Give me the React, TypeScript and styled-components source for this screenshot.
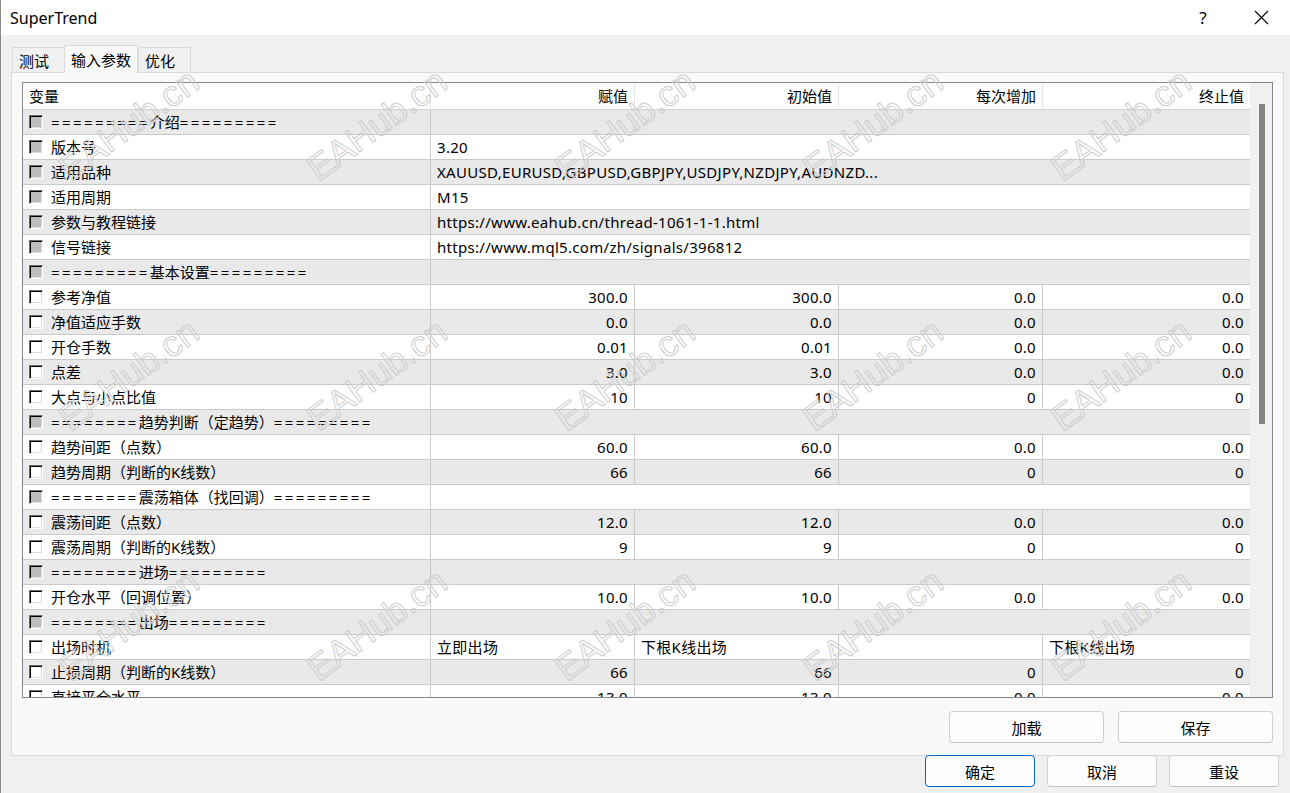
import styled, { createGlobalStyle } from "styled-components";

const GlobalStyle = createGlobalStyle`
  html, body {
    margin: 0;
    padding: 0;
    background: #f0f0f0;
  }
  * {
    box-sizing: border-box;
  }
`;

const COLS = "408px 204px 204px 204px 207px";
const FONT = `"Noto Sans", "Noto Sans CJK SC", sans-serif`;

type Row =
  | { kind: "section"; title: string; pre: number; post: number }
  | { kind: "info"; name: string; value: string }
  | { kind: "num"; name: string; values: string[] }
  | { kind: "text"; name: string; values: string[] };

const ROWS: Row[] = [
  { kind: "section", title: "介绍", pre: 9, post: 9 },
  { kind: "info", name: "版本号", value: "3.20" },
  { kind: "info", name: "适用品种", value: "XAUUSD,EURUSD,GBPUSD,GBPJPY,USDJPY,NZDJPY,AUDNZD..." },
  { kind: "info", name: "适用周期", value: "M15" },
  { kind: "info", name: "参数与教程链接", value: "https://www.eahub.cn/thread-1061-1-1.html" },
  { kind: "info", name: "信号链接", value: "https://www.mql5.com/zh/signals/396812" },
  { kind: "section", title: "基本设置", pre: 9, post: 9 },
  { kind: "num", name: "参考净值", values: ["300.0", "300.0", "0.0", "0.0"] },
  { kind: "num", name: "净值适应手数", values: ["0.0", "0.0", "0.0", "0.0"] },
  { kind: "num", name: "开仓手数", values: ["0.01", "0.01", "0.0", "0.0"] },
  { kind: "num", name: "点差", values: ["3.0", "3.0", "0.0", "0.0"] },
  { kind: "num", name: "大点与小点比值", values: ["10", "10", "0", "0"] },
  { kind: "section", title: "趋势判断（定趋势）", pre: 8, post: 9 },
  { kind: "num", name: "趋势间距（点数）", values: ["60.0", "60.0", "0.0", "0.0"] },
  { kind: "num", name: "趋势周期（判断的K线数）", values: ["66", "66", "0", "0"] },
  { kind: "section", title: "震荡箱体（找回调）", pre: 8, post: 9 },
  { kind: "num", name: "震荡间距（点数）", values: ["12.0", "12.0", "0.0", "0.0"] },
  { kind: "num", name: "震荡周期（判断的K线数）", values: ["9", "9", "0", "0"] },
  { kind: "section", title: "进场", pre: 8, post: 9 },
  { kind: "num", name: "开仓水平（回调位置）", values: ["10.0", "10.0", "0.0", "0.0"] },
  { kind: "section", title: "出场", pre: 8, post: 9 },
  { kind: "text", name: "出场时机", values: ["立即出场", "下根K线出场", "", "下根K线出场"] },
  { kind: "num", name: "止损周期（判断的K线数）", values: ["66", "66", "0", "0"] },
  { kind: "num", name: "直接平仓水平", values: ["13.0", "13.0", "0.0", "0.0"] },
];

const Window = styled.div`
  position: relative;
  width: 1290px;
  height: 793px;
  overflow: hidden;
  background: #f0f0f0;
  border-left: 1px solid #8a8a8a;
  font-family: ${FONT};
  color: #000;
  display: flex;
  flex-direction: column;
`;

const TitleBar = styled.div`
  height: 35px;
  flex: none;
  background: #fff;
  display: flex;
  align-items: center;
  padding-left: 9px;
  font-size: 16px;
`;

const Title = styled.div`
  flex: 1;
`;

const TitleButton = styled.div`
  width: 58px;
  height: 35px;
  display: flex;
  align-items: center;
  justify-content: center;
  font-size: 17px;
`;

const Body = styled.div`
  flex: 1;
  display: flex;
  flex-direction: column;
  padding: 10px 6px 0 10px;
`;

const Tabs = styled.div`
  display: flex;
  align-items: flex-end;
  height: 27px;
  padding-left: 1px;
`;

const Tab = styled.div<{ $active?: boolean }>`
  height: ${(p) => (p.$active ? "28px" : "25px")};
  padding: ${(p) => (p.$active ? "0 6px" : "0 15px 0 6px")};
  display: flex;
  align-items: center;
  font-size: 15px;
  background: ${(p) => (p.$active ? "#f9f9f9" : "#f0f0f0")};
  border: 1px solid #d9d9d9;
  border-bottom: none;
  margin-bottom: ${(p) => (p.$active ? "-1px" : "0")};
  margin-left: ${(p) => (p.$active ? "-1px" : "0")};
  position: relative;
  z-index: ${(p) => (p.$active ? 1 : 0)};
`;

const Panel = styled.div`
  height: 684px;
  background: #f9f9f9;
  border: 1px solid #d9d9d9;
  padding: 9px 10px 10px 10px;
  display: flex;
  flex-direction: column;
`;

const ListBox = styled.div`
  height: 616px;
  width: 1251px;
  border: 1px solid #828790;
  background: #fff;
  display: flex;
`;

const ListContent = styled.div`
  width: 1227px;
  display: flex;
  flex-direction: column;
`;

const HeaderRow = styled.div`
  display: grid;
  grid-template-columns: ${COLS};
  height: 27px;
  flex: none;
  border-bottom: 1px solid #d2d2d2;
`;

const HeaderCell = styled.div<{ $left?: boolean }>`
  font-size: 15px;
  line-height: 26px;
  padding: 0 6px;
  text-align: ${(p) => (p.$left ? "left" : "right")};
  border-right: 1px solid #e5e5e5;
  &:last-child {
    border-right: none;
  }
`;

const Rows = styled.div`
  flex: 1;
  overflow: hidden;
`;

const RowLine = styled.div<{ $alt: boolean }>`
  display: grid;
  grid-template-columns: ${COLS};
  height: 25px;
  background: ${(p) => (p.$alt ? "#e9e9e9" : "#fff")};
  border-bottom: 1px solid #cacaca;
`;

const Cell = styled.div<{ $align?: "left" | "right"; $span?: boolean }>`
  font-size: 15px;
  line-height: 24px;
  letter-spacing: 0.3px;
  padding: 0 6px;
  white-space: nowrap;
  overflow: visible;
  text-align: ${(p) => (p.$align === "right" ? "right" : "left")};
  grid-column: ${(p) => (p.$span ? "2 / -1" : "auto")};
  border-right: 1px solid #cacaca;
  &:last-child {
    border-right: none;
  }
`;

const NameCell = styled(Cell)`
  display: flex;
  align-items: center;
  gap: 8px;
  letter-spacing: 0;
`;

const Equals = styled.span`
  letter-spacing: 2.4px;
`;

const Check = styled.span<{ $disabled?: boolean }>`
  width: 14px;
  height: 14px;
  flex: none;
  background: ${(p) => (p.$disabled ? "#bdbdbd" : "#fff")};
  border-top: 1px solid #6d6d6d;
  border-left: 1px solid #6d6d6d;
  border-right: 1px solid #fff;
  border-bottom: 1px solid #fff;
  box-shadow: inset 1px 1px 0 #000, inset -1px -1px 0 #dedede;
`;

const ScrollTrack = styled.div`
  width: 22px;
  flex: none;
  background: #f0f0f0;
  padding-top: 21px;
  display: flex;
  justify-content: center;
`;

const ScrollThumb = styled.div`
  width: 6px;
  height: 320px;
  margin-left: 1px;
  background: #858585;
`;

const PanelButtons = styled.div`
  display: flex;
  justify-content: flex-end;
  gap: 14px;
  margin-top: 13px;
`;

const Button = styled.button<{ $w: number; $primary?: boolean }>`
  width: ${(p) => p.$w}px;
  height: 32px;
  font-family: ${FONT};
  font-size: 15px;
  color: #000;
  background: #fdfdfd;
  border: 1px solid ${(p) => (p.$primary ? "#0067c0" : "#d0d0d0")};
  border-bottom-color: ${(p) => (p.$primary ? "#0067c0" : "#bfbfbf")};
  border-radius: 4px;
  padding: 0;
`;

const Footer = styled.div`
  display: flex;
  justify-content: flex-end;
  gap: 12px;
  padding-right: 5px;
  margin-top: -1px;
`;

const Watermark = styled.div`
  position: absolute;
  width: 220px;
  margin-left: -110px;
  margin-top: -21px;
  text-align: center;
  font-family: "Liberation Sans", Arial, sans-serif;
  font-size: 36px;
  line-height: 42px;
  color: transparent;
  -webkit-text-stroke: 1px #cdcdcd;
  transform: rotate(-36deg);
  pointer-events: none;
  white-space: nowrap;
`;

function CloseIcon() {
  return (
    <svg width="15" height="15" viewBox="0 0 15 15">
      <path d="M1 1 L14 14 M14 1 L1 14" stroke="#000" strokeWidth="1.1" fill="none" />
    </svg>
  );
}

function renderRow(row: Row, i: number) {
  const alt = i % 2 === 0;
  const disabled = row.kind === "section" || row.kind === "info";
  return (
    <RowLine key={i} $alt={alt}>
      <NameCell>
        <Check $disabled={disabled} />
        {row.kind === "section" ? (
          <span>
            <Equals>{"=".repeat(row.pre)}</Equals>
            {row.title}
            <Equals>{"=".repeat(row.post)}</Equals>
          </span>
        ) : (
          <span>{row.name}</span>
        )}
      </NameCell>
      {row.kind === "section" && <Cell $span />}
      {row.kind === "info" && <Cell $span>{row.value}</Cell>}
      {row.kind === "num" &&
        row.values.map((v, j) => (
          <Cell key={j} $align="right">
            {v}
          </Cell>
        ))}
      {row.kind === "text" &&
        row.values.map((v, j) => <Cell key={j}>{v}</Cell>)}
    </RowLine>
  );
}

const MARKS_X = [128, 376, 624, 872, 1120];
const MARKS_Y = [125, 375, 625];

export default function App() {
  return (
    <>
      <GlobalStyle />
      <Window>
        <TitleBar>
          <Title>SuperTrend</Title>
          <TitleButton>?</TitleButton>
          <TitleButton>
            <CloseIcon />
          </TitleButton>
        </TitleBar>
        <Body>
          <Tabs>
            <Tab>测试</Tab>
            <Tab $active>输入参数</Tab>
            <Tab>优化</Tab>
          </Tabs>
          <Panel>
            <ListBox>
              <ListContent>
                <HeaderRow>
                  <HeaderCell $left>变量</HeaderCell>
                  <HeaderCell>赋值</HeaderCell>
                  <HeaderCell>初始值</HeaderCell>
                  <HeaderCell>每次增加</HeaderCell>
                  <HeaderCell>终止值</HeaderCell>
                </HeaderRow>
                <Rows>{ROWS.map(renderRow)}</Rows>
              </ListContent>
              <ScrollTrack>
                <ScrollThumb />
              </ScrollTrack>
            </ListBox>
            <PanelButtons>
              <Button $w={155}>加载</Button>
              <Button $w={155}>保存</Button>
            </PanelButtons>
          </Panel>
          <Footer>
            <Button $w={110} $primary>
              确定
            </Button>
            <Button $w={110}>取消</Button>
            <Button $w={110}>重设</Button>
          </Footer>
        </Body>
        {MARKS_Y.map((y) =>
          MARKS_X.map((x) => (
            <Watermark key={`${x}-${y}`} style={{ left: x, top: y }}>
              EAHub.cn
            </Watermark>
          ))
        )}
      </Window>
    </>
  );
}
